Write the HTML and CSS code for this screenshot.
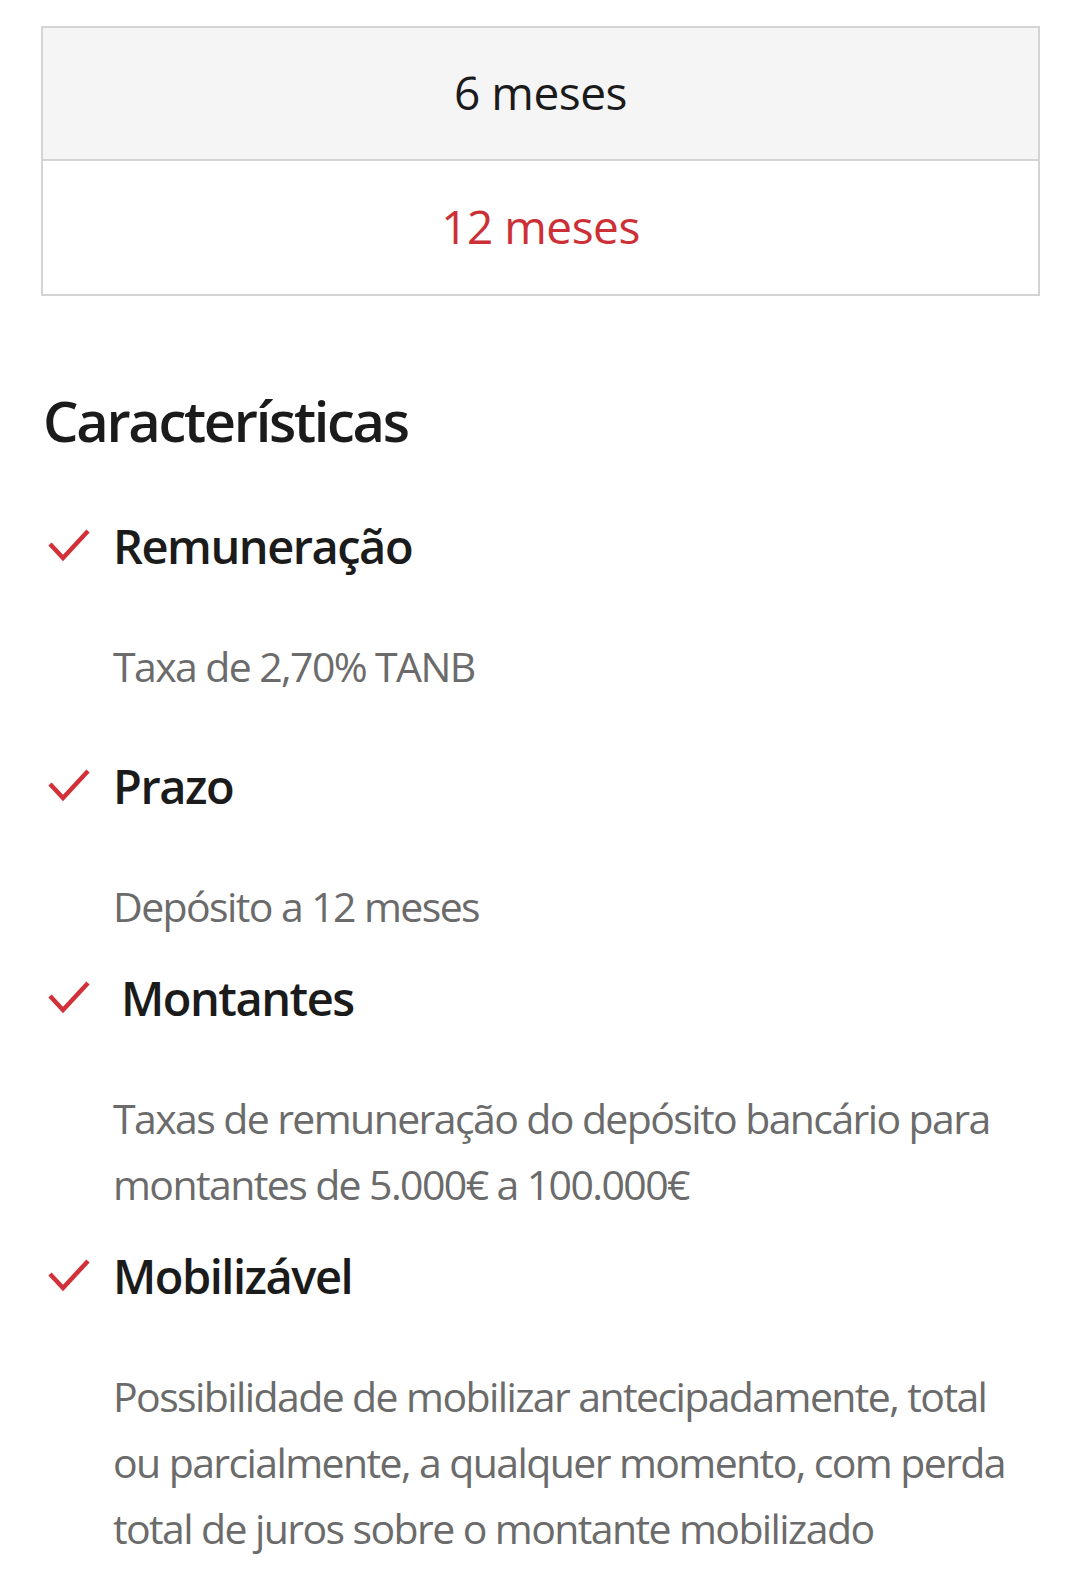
FILE: index.html
```html
<!DOCTYPE html>
<html lang="pt">
<head>
<meta charset="utf-8">
<link rel="stylesheet" href="styles.css">
</head>
<body>
<main class="page">
  <div class="terms">
    <div class="term term--alt">6 meses</div>
    <div class="term term--active">12 meses</div>
  </div>

  <h2 class="section-title">Características</h2>

  <ul class="features">
    <li class="feature feature--wide">
      <div class="feature-head">
        <svg class="check" viewBox="0 0 44 36" aria-hidden="true"><path d="M3 16 L16 30 L41 3" fill="none" stroke="#d3313a" stroke-width="4.5"/></svg>
        <span class="feature-title">Remuneração</span>
      </div>
      <p class="feature-text">Taxa de 2,70% TANB</p>
    </li>
    <li class="feature">
      <div class="feature-head">
        <svg class="check" viewBox="0 0 44 36" aria-hidden="true"><path d="M3 16 L16 30 L41 3" fill="none" stroke="#d3313a" stroke-width="4.5"/></svg>
        <span class="feature-title">Prazo</span>
      </div>
      <p class="feature-text">Depósito a 12 meses</p>
    </li>
    <li class="feature">
      <div class="feature-head">
        <svg class="check" viewBox="0 0 44 36" aria-hidden="true"><path d="M3 16 L16 30 L41 3" fill="none" stroke="#d3313a" stroke-width="4.5"/></svg>
        <span class="feature-title feature-title--indent">Montantes</span>
      </div>
      <p class="feature-text">Taxas de remuneração do depósito bancário para montantes de 5.000€ a 100.000€</p>
    </li>
    <li class="feature">
      <div class="feature-head">
        <svg class="check" viewBox="0 0 44 36" aria-hidden="true"><path d="M3 16 L16 30 L41 3" fill="none" stroke="#d3313a" stroke-width="4.5"/></svg>
        <span class="feature-title">Mobilizável</span>
      </div>
      <p class="feature-text">Possibilidade de mobilizar antecipadamente, total ou parcialmente, a qualquer momento, com perda total de juros sobre o montante mobilizado</p>
    </li>
  </ul>
</main>
</body>
</html>
```

FILE: styles.css
```css
* { box-sizing: border-box; }
html, body { margin: 0; padding: 0; background: #fff; }
body {
  font-family: "Open Sans", "Noto Sans", sans-serif;
  color: #1b1b1b;
}
.page {
  padding: 26px 47px 0 41px;
}
.terms {
  border: 2px solid #d4d4d4;
  display: flex;
  flex-direction: column;
  margin-right: -7px;
}
.term {
  height: 133px;
  display: flex;
  align-items: center;
  justify-content: center;
  font-size: 46px;
  letter-spacing: -0.5px;
  padding-bottom: 4px;
}
.term--alt {
  background: #f5f5f5;
  color: #1b1b1b;
  border-bottom: 2px solid #d4d4d4;
}
.term--active {
  color: #cc2f36;
}
.section-title {
  margin: 88px 0 0 2px;
  font-size: 56px;
  font-weight: 600;
  letter-spacing: -2.3px;
  line-height: 72px;
}
.features {
  list-style: none;
  margin: 54px 0 0 0;
  padding: 0;
}
.feature-head {
  display: flex;
  align-items: center;
  height: 72px;
}
.check {
  width: 44px;
  height: 36px;
  margin: 0 22px 0 6px;
  flex: none;
}
.feature-title {
  font-size: 47px;
  font-weight: 600;
  letter-spacing: -1.5px;
}
.feature-title--indent {
  margin-left: 8px;
}
.feature-text {
  margin: 51px 0 23px 72px;
  font-size: 41px;
  line-height: 66px;
  color: #6b6b6b;
  letter-spacing: -1.6px;
}
.feature--wide .feature-text {
  margin-bottom: 51px;
}
```
